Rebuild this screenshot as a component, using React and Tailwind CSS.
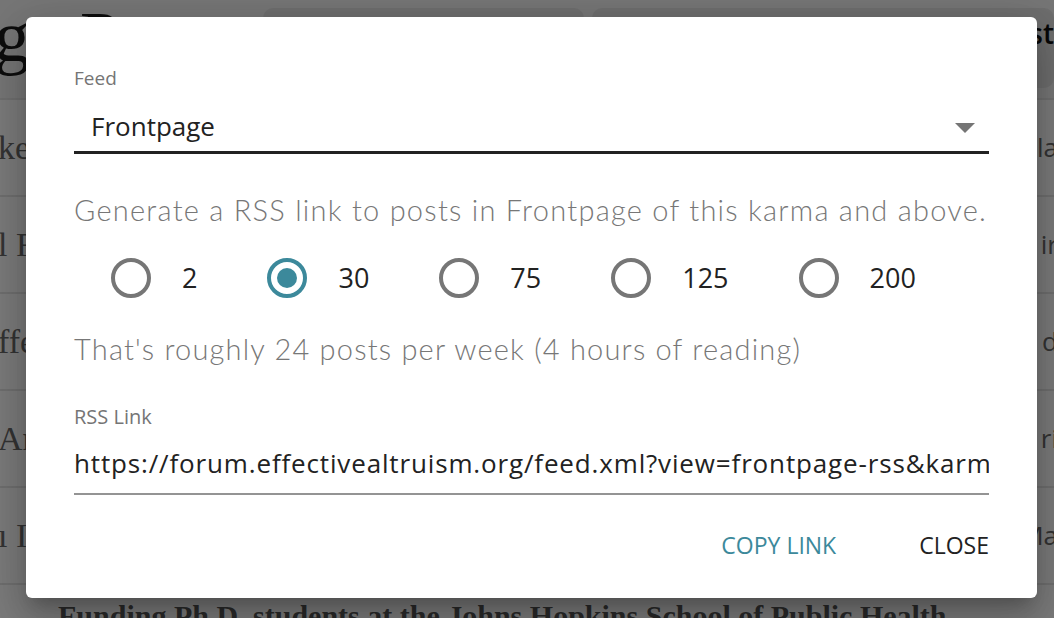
import React, { useState } from "react";

const sans = { fontFamily: '"Open Sans", "Noto Sans", sans-serif' };
const body = { fontFamily: 'Lato, "Open Sans", sans-serif' };

const karmaOptions = [2, 30, 75, 125, 200];

const rows = [
  { left: "ke", right: "la" },
  { left: "l Fi", right: "ir" },
  { left: "ffe", right: "d" },
  { left: "An", right: "ri" },
  { left: "ı I", right: "Ma" },
];

function Radio({ checked }) {
  return (
    <span
      className={
        "flex h-[40px] w-[40px] items-center justify-center rounded-full border-[4px] " +
        (checked ? "border-[#3c899b]" : "border-[#767676]")
      }
    >
      {checked && <span className="h-[20px] w-[20px] rounded-full bg-[#3c899b]" />}
    </span>
  );
}

export default function App() {
  const [karma, setKarma] = useState(30);

  return (
    <div className="relative h-[618px] w-[1054px] overflow-hidden bg-[#ececec]">
      {/* page behind the dialog */}
      <div className="flex h-[98px] items-start">
        <div
          className="ml-[-6px] mt-[-8px] w-[269px] shrink-0 overflow-hidden whitespace-nowrap text-[72px] leading-[90px] text-[#1a1a1a]"
          style={{ fontFamily: '"Liberation Serif", serif' }}
        >
          ge Posts
        </div>
        <div className="mt-[8px] h-[80px] w-[321px] rounded-[10px] bg-[#dcdcdc]" />
        <div className="ml-[8px] mt-[8px] flex h-[80px] flex-1 justify-end rounded-[10px] bg-[#dcdcdc] pt-[4px]">
          <span className="text-[28px] font-semibold text-[#111]" style={sans}>
            st
          </span>
        </div>
      </div>
      {rows.map((r, i) => (
        <div
          key={i}
          className="flex h-[97px] items-center justify-between border-t-[2px] border-[#dedede] bg-[#f7f7f7]"
        >
          <span
            className="ml-[-2px] text-[34px] text-[#666]"
            style={{ fontFamily: '"Liberation Serif", serif' }}
          >
            {r.left}
          </span>
          <span className="mr-[-4px] text-[26px] text-[#666]" style={sans}>
            {r.right}
          </span>
        </div>
      ))}
      <div className="border-t-[2px] border-[#dedede] bg-[#f7f7f7] pl-[58px] pt-[8px]">
        <span
          className="text-[30px] font-bold text-[#555]"
          style={{ fontFamily: '"Liberation Serif", serif' }}
        >
          Funding Ph.D. students at the Johns Hopkins School of Public Health
        </span>
      </div>

      {/* overlay */}
      <div className="absolute inset-0 bg-black/50" />

      {/* dialog */}
      <div className="absolute left-[26px] top-[17px] h-[581px] w-[1011px] rounded-[6px] bg-white px-[48px] pt-[49px] shadow-[0_11px_15px_-7px_rgba(0,0,0,0.2),0_24px_38px_3px_rgba(0,0,0,0.14),0_9px_46px_8px_rgba(0,0,0,0.12)]">
        <div className="text-[19px] leading-[24px] text-[#757575]" style={sans}>
          Feed
        </div>
        <div className="mt-[20px] flex items-center justify-between border-b-[3px] border-[#222] pb-[8px] pl-[17px] pr-[14px]">
          <span className="text-[26px] leading-[33px] text-[#222]" style={sans}>
            Frontpage
          </span>
          <svg width="20" height="10" viewBox="0 0 20 10" className="mt-[2px]">
            <path d="M0 0 L20 0 L10 10 Z" fill="#757575" />
          </svg>
        </div>

        <p
          className="mt-[38px] whitespace-nowrap text-[29px] font-light leading-[36px] tracking-[1.25px] text-[#777]"
          style={body}
        >
          Generate a RSS link to posts in Frontpage of this karma and above.
        </p>

        <div className="ml-[37px] mt-[30px] flex items-center">
          {karmaOptions.map((k) => (
            <label
              key={k}
              className="mr-[70px] flex cursor-pointer items-center"
              onClick={() => setKarma(k)}
            >
              <Radio checked={karma === k} />
              <span className="ml-[31px] text-[27px] leading-[40px] text-[#222]" style={sans}>
                {k}
              </span>
            </label>
          ))}
        </div>

        <p
          className="mt-[33px] whitespace-nowrap text-[29px] font-light leading-[36px] tracking-[1.2px] text-[#777]"
          style={body}
        >
          That's roughly 24 posts per week (4 hours of reading)
        </p>

        <div className="mt-[38px] text-[20px] leading-[24px] text-[#757575]" style={sans}>
          RSS Link
        </div>
        <div className="mt-[17px] overflow-hidden whitespace-nowrap border-b-[2px] border-[#949494] pb-[13px]">
          <span className="text-[26px] leading-[34px] tracking-[0.85px] text-[#222]" style={sans}>
            https://forum.effectivealtruism.org/feed.xml?view=frontpage-rss&karmaThreshold=30
          </span>
        </div>

        <div className="mt-[33px] flex items-center justify-end gap-[83px]">
          <button className="text-[23px] font-medium uppercase text-[#3c899b]" style={sans}>
            Copy Link
          </button>
          <button className="text-[23px] font-medium uppercase text-[#222]" style={sans}>
            Close
          </button>
        </div>
      </div>
    </div>
  );
}
